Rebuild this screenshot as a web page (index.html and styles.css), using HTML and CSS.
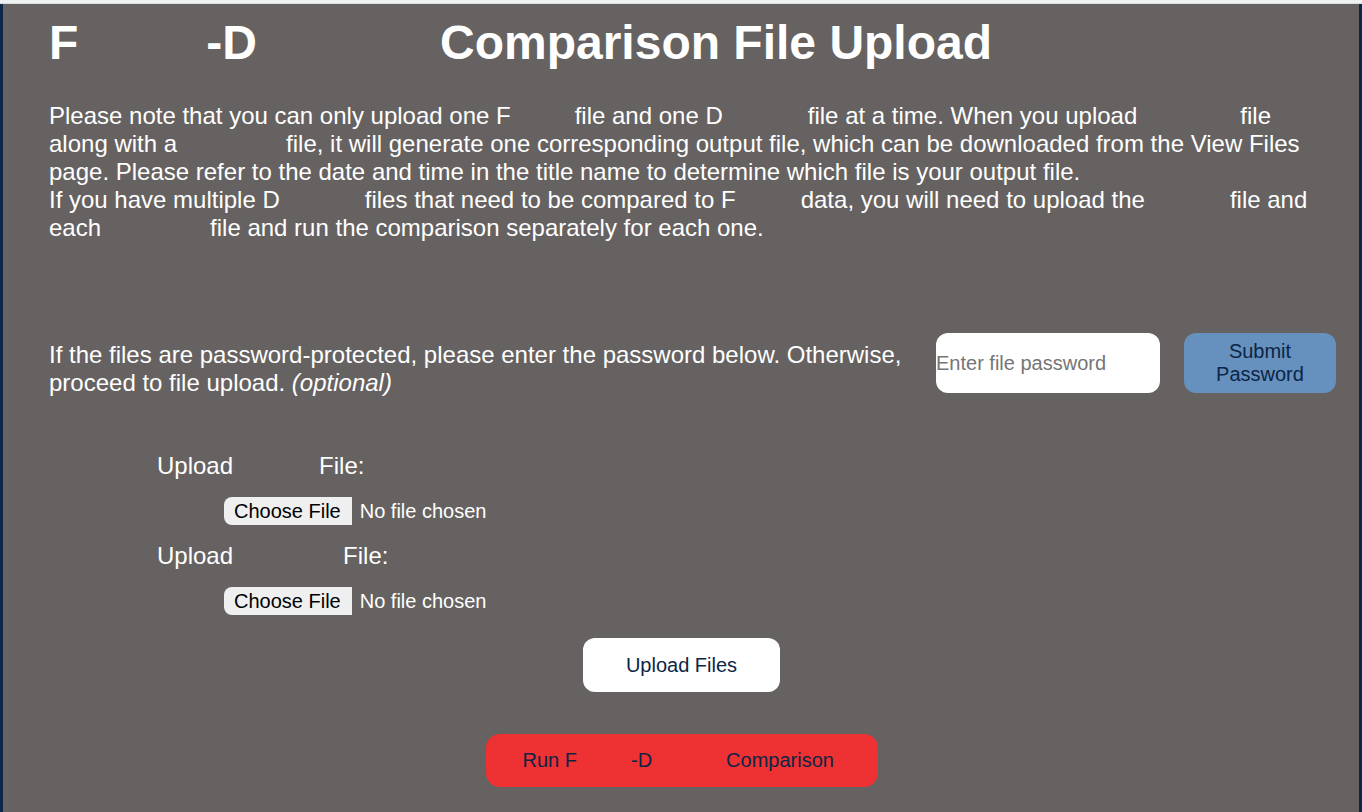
FILE: index.html
```html
<!DOCTYPE html>
<html lang="en">
<head>
<meta charset="utf-8">
<title>Comparison File Upload</title>
<link rel="stylesheet" href="styles.css">
</head>
<body>
<div class="topbar"></div>
<main class="page">
  <h1 class="title">F<span class="gap t1"></span>-D<span class="gap t2"></span>Comparison File Upload</h1>
  <p class="intro">
    Please note that you can only upload one F<span class="gap p1"></span>file and one D<span class="gap p2"></span>file at a time. When you upload<span class="gap p3"></span>file<br>
    along with a<span class="gap p4"></span>file, it will generate one corresponding output file, which can be downloaded from the View Files<br>
    page. Please refer to the date and time in the title name to determine which file is your output file.<br>
    If you have multiple D<span class="gap p5"></span>files that need to be compared to F<span class="gap p6"></span>data, you will need to upload the<span class="gap p7"></span>file and<br>
    each<span class="gap p8"></span>file and run the comparison separately for each one.
  </p>

  <section class="password-row">
    <p class="password-text">If the files are password-protected, please enter the password below. Otherwise,<br>proceed to file upload. <em>(optional)</em></p>
    <input class="password-input" type="password" placeholder="Enter file password">
    <button class="submit-btn" type="button">Submit<br>Password</button>
  </section>

  <section class="uploads">
    <div class="upload-group">
      <label class="upload-label">Upload<span class="gap u1"></span>File:</label>
      <input class="file-input" type="file">
    </div>
    <div class="upload-group">
      <label class="upload-label">Upload<span class="gap u2"></span>File:</label>
      <input class="file-input" type="file">
    </div>
  </section>

  <div class="actions">
    <button class="upload-btn" type="button">Upload Files</button>
    <button class="run-btn" type="button">Run F<span class="gap r1"></span>-D<span class="gap r2"></span>Comparison</button>
  </div>
</main>
</body>
</html>
```

FILE: styles.css
```css
html, body {
  margin: 0;
  padding: 0;
}

body {
  font-family: "Liberation Sans", Arial, sans-serif;
  background: #666261;
  color: #ffffff;
}

.topbar {
  height: 4px;
  background: #eef2f1;
  border-bottom: 1px solid #d9dfdd;
  box-sizing: border-box;
}

.page {
  background: #666261;
  border-left: 3px solid #0c2747;
  border-right: 3px solid #0c2747;
  min-height: 808px;
  box-sizing: border-box;
  padding: 0 23px 0 46px;
  display: flex;
  flex-direction: column;
}

.gap {
  display: inline-block;
  height: 1px;
}

.title {
  margin: 11px 0 0 0;
  font-size: 48px;
  line-height: 55px;
  font-weight: bold;
  white-space: nowrap;
}

.t1 { width: 128px; }
.t2 { width: 183px; }

.intro {
  margin: 32px 0 0 0;
  font-size: 24px;
  line-height: 28px;
  white-space: nowrap;
}

.p1 { width: 64px; }
.p2 { width: 85px; }
.p3 { width: 103px; }
.p4 { width: 109px; }
.p5 { width: 85px; }
.p6 { width: 65px; }
.p7 { width: 85px; }
.p8 { width: 109px; }

.password-row {
  margin-top: 91px;
  display: flex;
  align-items: flex-start;
}

.password-text {
  margin: 8px 0 0 0;
  flex: 1;
  font-size: 24px;
  line-height: 28px;
}

.password-input {
  width: 224px;
  height: 60px;
  box-sizing: border-box;
  border: none;
  border-radius: 12px;
  background: #ffffff;
  padding: 0;
  font-family: inherit;
  font-size: 20px;
  color: #222;
  outline: none;
}

.password-input::placeholder {
  color: #757575;
}

.submit-btn {
  margin-left: 24px;
  width: 152px;
  height: 60px;
  border: none;
  border-radius: 12px;
  background: #6690bd;
  color: #0c2545;
  font-family: inherit;
  font-size: 20px;
  line-height: 23px;
  padding: 0;
}

.uploads {
  margin-top: 55px;
  padding-left: 108px;
  display: flex;
  flex-direction: column;
}

.upload-group {
  display: flex;
  flex-direction: column;
  align-items: flex-start;
}

.upload-label {
  font-size: 24px;
  line-height: 28px;
  height: 28px;
}

.u1 { width: 86px; }
.u2 { width: 110px; }

.file-input {
  margin: 17px 0 17px 67px;
  font-family: inherit;
  font-size: 20px;
  color: #ffffff;
}

.file-input::file-selector-button {
  font-family: inherit;
  font-size: 20px;
  color: #000000;
  background: #efefef;
  border: none;
  border-radius: 8px 0 0 8px;
  padding: 2px 11px 2px 10px;
  margin-right: 8px;
  height: 28px;
}

.actions {
  margin-top: 6px;
  padding-right: 22px;
  display: flex;
  flex-direction: column;
  align-items: center;
}

.upload-btn {
  width: 197px;
  height: 54px;
  border: none;
  border-radius: 12px;
  background: #ffffff;
  color: #0c2545;
  font-family: inherit;
  font-size: 20px;
}

.run-btn {
  margin-top: 42px;
  width: 392px;
  height: 53px;
  border: none;
  border-radius: 14px;
  background: #ee3133;
  color: #0c2545;
  font-family: inherit;
  font-size: 20px;
  white-space: nowrap;
  text-align: left;
  padding: 0 0 0 37px;
}

.r1 { width: 54px; }
.r2 { width: 74px; }
```
